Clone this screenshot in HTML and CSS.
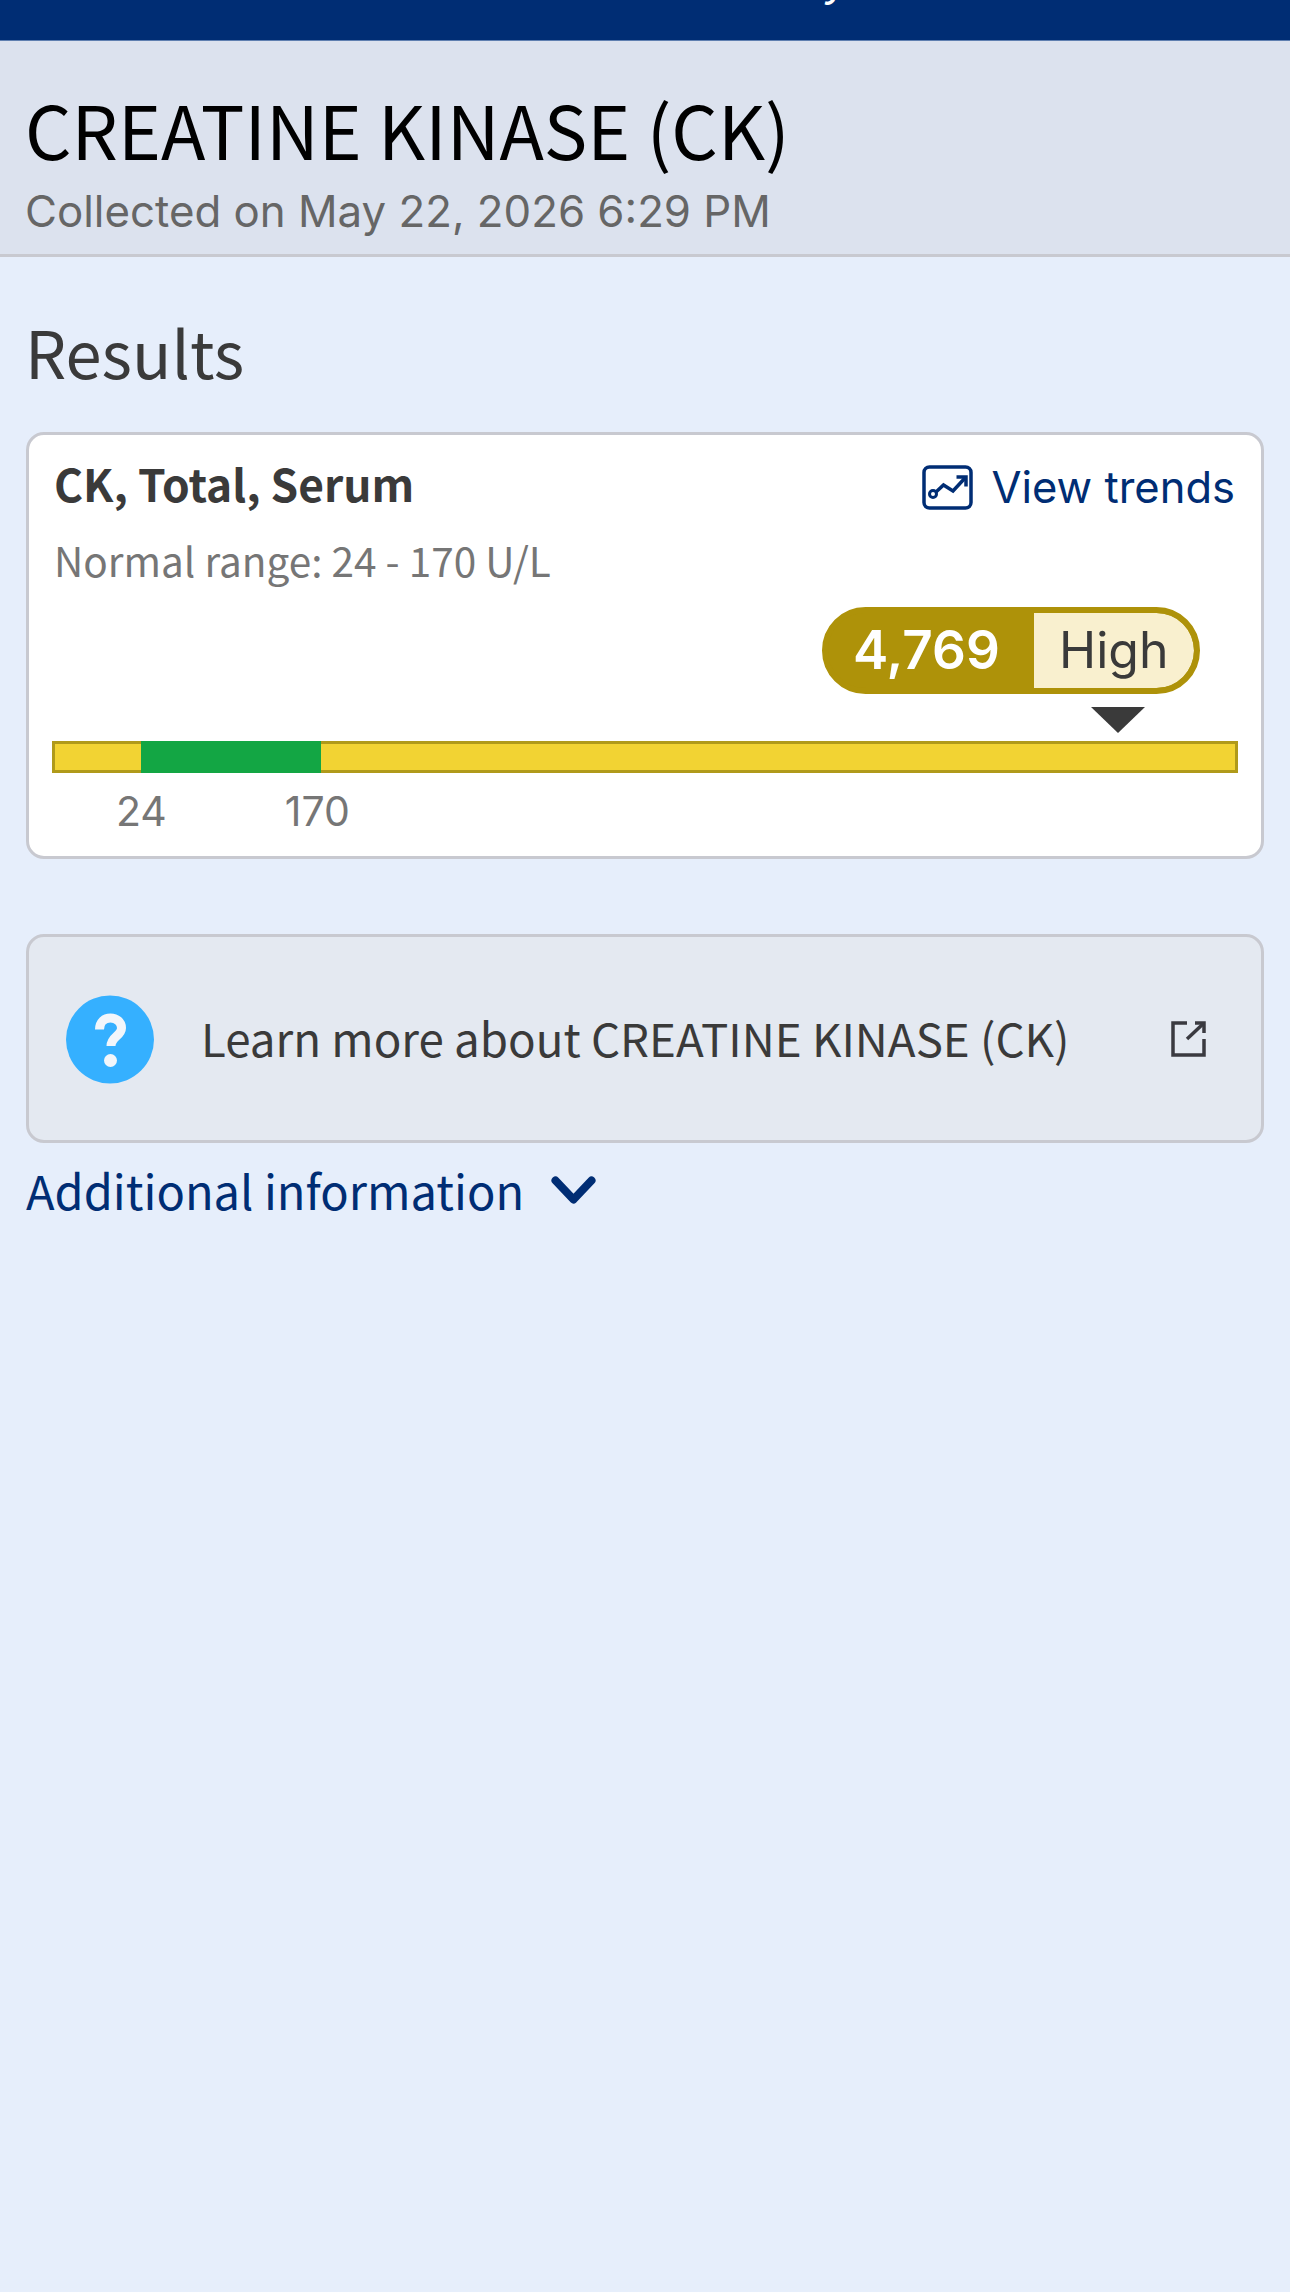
FILE: index.html
```html
<!DOCTYPE html>
<html>
<head>
  <title>CREATINE KINASE (CK)</title>
  <link rel="stylesheet" href="styles.css">
</head>
<body>
  <div class="top-bar"><span class="top-bar-title">y</span></div>

  <div class="test-header">
    <h1>CREATINE KINASE (CK)</h1>
    <div class="collected">Collected on May 22, 2026 6:29 PM</div>
  </div>

  <div class="content">
    <h2 class="section-title">Results</h2>

    <div class="result-card">
      <div class="card-head">
        <div class="card-name">CK, Total, Serum</div>
        <a class="trends-link">
          <svg class="trends-icon" viewBox="0 0 51 45" fill="none" stroke="#002d74" stroke-width="3.500">
            <rect x="2" y="2" width="47" height="41" rx="5.500"/>
            <circle cx="11" cy="29" r="3.500" stroke-width="3"/>
            <path d="M14 27l7.500-7 9.500 6 12-13"/>
            <path d="M34.500 12H44v9.500"/>
          </svg>
          <span>View trends</span>
        </a>
      </div>
      <div class="normal-range">Normal range: 24 - 170 U/L</div>

      <div class="value-row">
        <div class="value-pill">
          <span class="value-number">4,769</span>
          <span class="value-flag">High</span>
        </div>
      </div>
      <div class="marker-row"><span class="marker"></span></div>

      <div class="range-bar">
        <div class="range-low"></div>
        <div class="range-normal"></div>
        <div class="range-high"></div>
      </div>
      <div class="range-labels">
        <span>24</span>
        <span>170</span>
      </div>
    </div>

    <div class="learn-box">
      <svg class="help-icon" viewBox="0 0 88 88">
        <circle cx="44" cy="44" r="44" fill="#35b0ff"/>
        <path d="M33.500 34c0-7.500 5-11.500 11-11.500s11 4 11 10c0 8-10.500 8.500-10.500 18" fill="none" stroke="#f2f6fb" stroke-width="9"/>
        <circle cx="44.500" cy="65" r="6.500" fill="#f2f6fb"/>
      </svg>
      <span class="learn-text">Learn more about CREATINE KINASE (CK)</span>
      <svg class="external-icon" viewBox="0 0 35 36" fill="none" stroke="#3a3a40" stroke-width="3.500">
        <path d="M16 2H2v32h31V18"/>
        <path d="M16 18L32 3"/>
        <path d="M24 2h9v10"/>
      </svg>
    </div>

    <a class="additional-info">
      <span>Additional information</span>
      <svg class="chevron" viewBox="0 0 45 28" fill="none" stroke="#002d74" stroke-width="8" stroke-linecap="round" stroke-linejoin="round">
        <path d="M4.500 4.500l18 19 18-19"/>
      </svg>
    </a>
  </div>
</body>
</html>
```

FILE: styles.css
```css
body {
  margin: 0;
  min-height: 2292px;
  background: #e6eefb;
  font-family: 'Noto Sans CJK SC', 'Noto Sans', sans-serif;
  color: #3a3a3a;
}

.top-bar {
  height: 40px;
  background: #002d74;
  border-bottom: 1px solid #5f7fb0;
  overflow: hidden;
  display: flex;
  justify-content: flex-end;
}

.top-bar-title {
  margin: -49px 444px 0 0;
  font-size: 44px;
  line-height: 50px;
  color: #fff;
}

.test-header {
  height: 213px;
  padding-left: 25px;
  background: #dce2ee;
  border-bottom: 3px solid #c8c9d0;
}

.test-header h1 {
  margin: 0;
  padding-top: 42px;
  font-size: 73px;
  font-weight: 400;
  line-height: 90px;
  color: #000;
}

.collected {
  margin-top: 13px;
  font-family: Inter, Roboto, sans-serif;
  font-size: 43.800px;
  line-height: 52px;
  color: #666;
}

.content {
  padding: 0 26px;
}

.section-title {
  margin: 0 0 0 -1px;
  padding-top: 56px;
  font-size: 65px;
  font-weight: 400;
  line-height: 76px;
}

.result-card {
  box-sizing: border-box;
  height: 427px;
  margin-top: 43px;
  padding: 0 23px;
  background: #fff;
  border: 3px solid #c8c9d0;
  border-radius: 18px;
}

.card-head {
  display: flex;
  justify-content: space-between;
  align-items: flex-start;
  padding: 21px 2px 0;
}

.card-name {
  font-size: 44.300px;
  font-weight: 700;
  line-height: 54px;
}

.trends-link {
  display: flex;
  align-items: center;
  gap: 19px;
  margin-right: 1px;
  padding-top: 9px;
  font-family: Inter, Roboto, sans-serif;
  font-size: 43.500px;
  line-height: 45px;
  color: #002d74;
}

.trends-icon {
  width: 51px;
  height: 45px;
}

.normal-range {
  padding: 22px 2px 0;
  font-size: 40.500px;
  line-height: 56px;
  color: #767676;
}

.value-row {
  display: flex;
  justify-content: flex-end;
  margin-top: 19px;
  padding-right: 38px;
}

.value-pill {
  display: flex;
  height: 87px;
  box-sizing: border-box;
  width: 378px;
  background: #ae9209;
  border: 6px solid #ae9209;
  border-radius: 44px;
  overflow: hidden;
  font-family: Inter, Roboto, sans-serif;
  font-size: 50px;
  line-height: 75px;
}

.value-number {
  width: 206px;
  padding-left: 25px;
  box-sizing: border-box;
  color: #fff;
  font-size: 53px;
  font-weight: 600;
}

.value-flag {
  flex: 1;
  padding-left: 25px;
  background: #f9f0cf;
  border-radius: 0 38px 38px 0;
  color: #3a3a3a;
}

.marker-row {
  display: flex;
  justify-content: flex-end;
  padding: 13px 93px 0 0;
}

.marker {
  width: 0;
  height: 0;
  border-left: 27.500px solid transparent;
  border-right: 27.500px solid transparent;
  border-top: 26px solid #3a3a3a;
}

.range-bar {
  display: flex;
  height: 32px;
  margin-top: 8px;
}

.range-low,
.range-high {
  box-sizing: border-box;
  background: #f2d333;
  border: 3px solid #b09a1a;
}

.range-low {
  width: 89px;
  border-right: none;
}

.range-normal {
  width: 180px;
  background: #13a644;
}

.range-high {
  flex: 1;
  border-left: none;
}

.range-labels {
  display: flex;
  padding: 14px 0 0 64px;
  font-family: Inter, Roboto, sans-serif;
  font-size: 41px;
  line-height: 48px;
  color: #767676;
}

.range-labels span:last-child {
  margin-left: 118px;
}

.learn-box {
  box-sizing: border-box;
  height: 209px;
  margin-top: 75px;
  display: flex;
  align-items: center;
  padding: 0 55px 0 37px;
  background: #e4e9f1;
  border: 3px solid #c8c9d0;
  border-radius: 18px;
}

.help-icon {
  width: 88px;
  height: 89px;
  flex: none;
  margin-top: 2px;
}

.learn-text {
  flex: 1;
  margin-left: 47px;
  font-size: 45.700px;
  line-height: 54px;
  margin-bottom: 3px;
}

.external-icon {
  width: 35px;
  height: 36px;
  flex: none;
}

.additional-info {
  display: flex;
  align-items: center;
  gap: 27px;
  margin-top: 16px;
  font-size: 47px;
  line-height: 62px;
  color: #002d74;
}

.chevron {
  width: 45px;
  height: 28px;
}
```
